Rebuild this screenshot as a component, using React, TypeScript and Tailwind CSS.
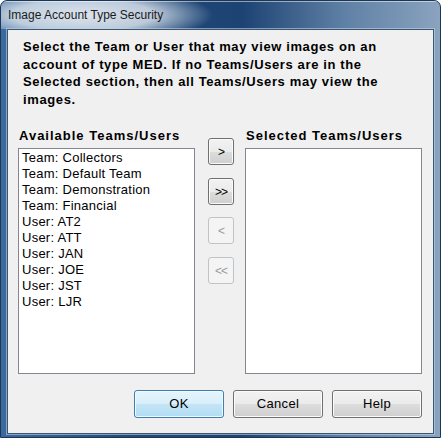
import React from "react";

const items = [
  "Team: Collectors",
  "Team: Default Team",
  "Team: Demonstration",
  "Team: Financial",
  "User: AT2",
  "User: ATT",
  "User: JAN",
  "User: JOE",
  "User: JST",
  "User: LJR",
];

function ArrowButton({ label, enabled, className }: { label: string; enabled: boolean; className?: string }) {
  return (
    <div
      className={
        "flex h-[27px] w-[26px] items-center justify-center rounded-[3px] border text-[12px] leading-none " +
        (enabled
          ? "border-[#707070] bg-[linear-gradient(#f2f2f2,#ebebeb_50%,#dddddd_50%,#cfcfcf)] text-black shadow-[inset_0_0_0_1px_#fbfbfb] "
          : "border-[#c0c4c7] bg-[#f4f4f4] text-[#9a9a9a] ") +
        (className ?? "")
      }
    >
      <span className="tracking-[-1px]">{label}</span>
    </div>
  );
}

function DlgButton({ label, def }: { label: string; def?: boolean }) {
  return (
    <div
      className={
        "flex h-[28px] w-[90px] items-center justify-center rounded-[3px] border text-[13px] tracking-[0.3px] text-black " +
        (def
          ? "border-[#3c7fb1] bg-[linear-gradient(#e5f4fc,#d8effb_50%,#c4e5f6_50%,#b2dcf3)] shadow-[inset_0_0_0_1px_#f2fafe]"
          : "border-[#707070] bg-[linear-gradient(#f2f2f2,#ebebeb_50%,#dddddd_50%,#cfcfcf)] shadow-[inset_0_0_0_1px_#fbfbfb]")
      }
    >
      {label}
    </div>
  );
}

export default function App() {
  return (
    <div className="h-[438px] w-[441px] bg-white font-['Liberation_Sans',Arial,sans-serif]">
      <div className="flex h-[438px] w-[441px] flex-col overflow-hidden rounded-t-[7px] border border-[#1b3656] bg-[linear-gradient(to_right,#3a6a9e,#22497a_30%,#1d4373_55%,#5f80a5_78%,#8aa3bf)]">
        {/* title bar */}
        <div className="flex h-[28px] shrink-0 items-center bg-[radial-gradient(ellipse_130px_28px_at_82px_14px,rgba(226,233,241,0.97),rgba(214,224,234,0.85)_55%,rgba(200,214,228,0)_100%)] pl-[7px] shadow-[inset_0_1px_0_rgba(255,255,255,0.5)]">
          <span className="text-[12px] text-[#1b1b1b]">Image Account Type Security</span>
        </div>
        {/* client */}
        <div className="mx-[6px] flex h-[405px] flex-col border border-[#3d5670] bg-[#f0f0f0] shadow-[0_0_0_1px_rgba(190,210,230,0.6)]">
          <p className="pl-[15px] pr-[4px] pt-[8px] text-[13px] font-bold leading-[17.5px] tracking-[0.62px] text-black whitespace-nowrap">
            Select the Team or User that may view images on an
            <br />
            account of type MED. If no Teams/Users are in the
            <br />
            Selected section, then all Teams/Users may view the
            <br />
            images.
          </p>
          <div className="mt-[20px] flex pl-[10px] pr-[11px]">
            <div className="flex w-[177px] flex-col">
              <div className="pl-[1px] text-[13px] font-bold leading-[16px] tracking-[1px] whitespace-nowrap text-black">Available Teams/Users</div>
              <div className="mt-[4px] h-[226px] border border-[#828790] bg-white pl-[3px] pt-[1px]">
                {items.map((t) => (
                  <div key={t} className="text-[13px] leading-[16px] tracking-[0.25px] text-black">
                    {t}
                  </div>
                ))}
              </div>
            </div>
            <div className="flex w-[50px] flex-col items-start pl-[13px] pt-[10px]">
              <ArrowButton label=">" enabled className="mt-[0px]" />
              <ArrowButton label=">>" enabled className="mt-[13px]" />
              <ArrowButton label="<" enabled={false} className="mt-[12px]" />
              <ArrowButton label="<<" enabled={false} className="mt-[13px]" />
            </div>
            <div className="flex w-[177px] flex-col">
              <div className="pl-[1px] text-[13px] font-bold leading-[16px] tracking-[1px] whitespace-nowrap text-black">Selected Teams/Users</div>
              <div className="mt-[4px] h-[226px] border border-[#828790] bg-white"></div>
            </div>
          </div>
          <div className="mt-[16px] flex justify-end gap-[9px] pr-[11px]">
            <DlgButton label="OK" def />
            <DlgButton label="Cancel" />
            <DlgButton label="Help" />
          </div>
        </div>
      </div>
    </div>
  );
}
